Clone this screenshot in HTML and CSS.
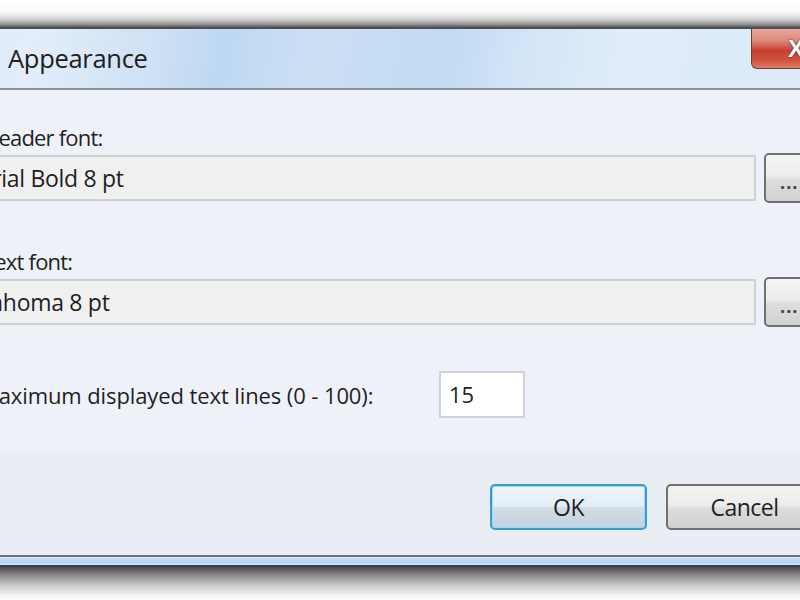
FILE: index.html
```html
<!DOCTYPE html>
<html>
<head>
<meta charset="utf-8">
<link rel="stylesheet" href="styles.css">
</head>
<body>
<div class="top-shadow"></div>
<div class="window">
  <div class="titlebar">
    <span class="title">Appearance</span>
    <div class="close"><span class="close-x">X</span></div>
  </div>
  <div class="content">
    <div class="label">Header font:</div>
    <div class="field-row">
      <div class="textbox">Arial Bold 8 pt</div>
      <div class="browse">...</div>
    </div>
    <div class="label label-second">Text font:</div>
    <div class="field-row">
      <div class="textbox">Tahoma 8 pt</div>
      <div class="browse">...</div>
    </div>
    <div class="max-row">
      <div class="max-label">Maximum displayed text lines (0 - 100):</div>
      <div class="number">15</div>
    </div>
  </div>
  <div class="footer">
    <div class="btn btn-ok">OK</div>
    <div class="btn btn-cancel">Cancel</div>
  </div>
  <div class="frame-bottom"></div>
</div>
<div class="bottom-shadow"></div>
</body>
</html>
```
FILE: styles.css
```css
html, body {
  margin: 0;
  padding: 0;
}
body {
  width: 800px;
  height: 600px;
  overflow: hidden;
  background: #ffffff;
  display: flex;
  flex-direction: column;
  font-family: "Open Sans", "Noto Sans", sans-serif;
  color: #1f1f1f;
}
.top-shadow {
  height: 27px;
  flex: none;
  background: linear-gradient(to bottom, #ffffff 0px, #fafafa 12px, #d4d4d4 19px, #9a9a9a 24px, #5c5c5c 27px);
}
.window {
  flex: none;
  width: 880px;
  margin-left: -40px;
  display: flex;
  flex-direction: column;
  border-top: 2px solid #4b4f55;
}
.titlebar {
  height: 59px;
  display: flex;
  justify-content: space-between;
  align-items: flex-start;
  padding-left: 48px;
  background: linear-gradient(100deg, #d9e8f7 0%, #e3eefa 8%, #cfe1f4 22%, #bed8f2 30%, #cce0f5 40%, #c2daf2 55%, #d4e5f7 64%, #e0ecf9 75%, #dbe9f8 100%);
  border-bottom: 2px solid #8a939c;
}
.title {
  font-size: 25.5px;
  line-height: 59px;
  color: #202020;
  letter-spacing: -0.3px;
}
.close {
  width: 70px;
  height: 40px;
  margin-right: 19px;
  box-sizing: border-box;
  border: 1px solid #6e3f37;
  border-top: none;
  border-radius: 0 0 0 6px;
  background: linear-gradient(to bottom, #e9a89c 0%, #dc8a7b 30%, #c7402f 55%, #d2523e 80%, #e07b66 100%);
  display: flex;
  align-items: center;
  padding-left: 36px;
}
.close-x {
  color: #ffffff;
  font-weight: bold;
  font-size: 24px;
  font-family: "Liberation Sans", sans-serif;
  text-shadow: 0 0 2px #5a2a20, 0 0 1px #5a2a20;
}
.content {
  background: #eef2f8;
  padding: 35px 0 0 7px;
  height: 362px;
  box-sizing: border-box;
}
.label {
  font-size: 22px;
  line-height: 24px;
  padding-left: 16px;
  letter-spacing: -0.8px;
}
.label-second {
  margin-top: 46px;
}
.field-row {
  margin-top: 4px;
  display: flex;
  align-items: center;
  gap: 8px;
}
.textbox {
  width: 789px;
  height: 46px;
  box-sizing: border-box;
  border: 2px solid #cdd0d4;
  background: #f0f0f0;
  font-size: 23px;
  line-height: 42px;
  padding-left: 9px;
  letter-spacing: -0.3px;
}
.browse {
  width: 48px;
  height: 50px;
  box-sizing: border-box;
  border: 2px solid #707070;
  border-radius: 5px;
  background: linear-gradient(to bottom, #f4f4f4 0%, #ececec 45%, #dddddd 55%, #d2d2d2 100%);
  font-size: 18px;
  line-height: 54px;
  padding-left: 14px;
  color: #444;
  font-weight: bold;
  letter-spacing: 1px;
}
.max-row {
  margin-top: 44px;
  display: flex;
  align-items: center;
  padding-left: 12px;
}
.max-label {
  width: 460px;
  font-size: 22px;
  letter-spacing: -0.1px;
}
.number {
  width: 86px;
  height: 47px;
  box-sizing: border-box;
  border: 2px solid #cfd2d6;
  background: #ffffff;
  font-size: 22px;
  line-height: 43px;
  padding-left: 8px;
}
.footer {
  height: 103px;
  box-sizing: border-box;
  background: #e9edf4;
  display: flex;
  justify-content: flex-end;
  gap: 19px;
  padding: 32px 17px 0 0;
}
.btn {
  width: 157px;
  height: 46px;
  box-sizing: border-box;
  border: 2px solid #707070;
  border-radius: 5px;
  background: linear-gradient(to bottom, #f3f3f3 0%, #ebebeb 48%, #dddddd 52%, #d0d0d0 100%);
  font-size: 23px;
  line-height: 42px;
  text-align: center;
  letter-spacing: -0.5px;
}
.btn-ok {
  border-color: #3c9bd0;
  box-shadow: inset 0 0 0 1px #9fd6f2;
  background: linear-gradient(to bottom, #eef5fa 0%, #e3edf4 48%, #cfdce6 52%, #c4d4e0 100%);
}
.frame-bottom {
  height: 8px;
  border-top: 2px solid #6a7480;
  border-bottom: 2px solid #3b3d40;
  background: linear-gradient(to bottom, #e6f0fa 0px, #bcd8f2 2px, #b4d3f0 6px, #d8e8f6 8px);
}
.bottom-shadow {
  flex: 1;
  background: linear-gradient(to bottom, #4a4a4a 0px, #8a8a8a 8px, #c8c8c8 18px, #f2f2f2 28px, #ffffff 34px);
}
```
